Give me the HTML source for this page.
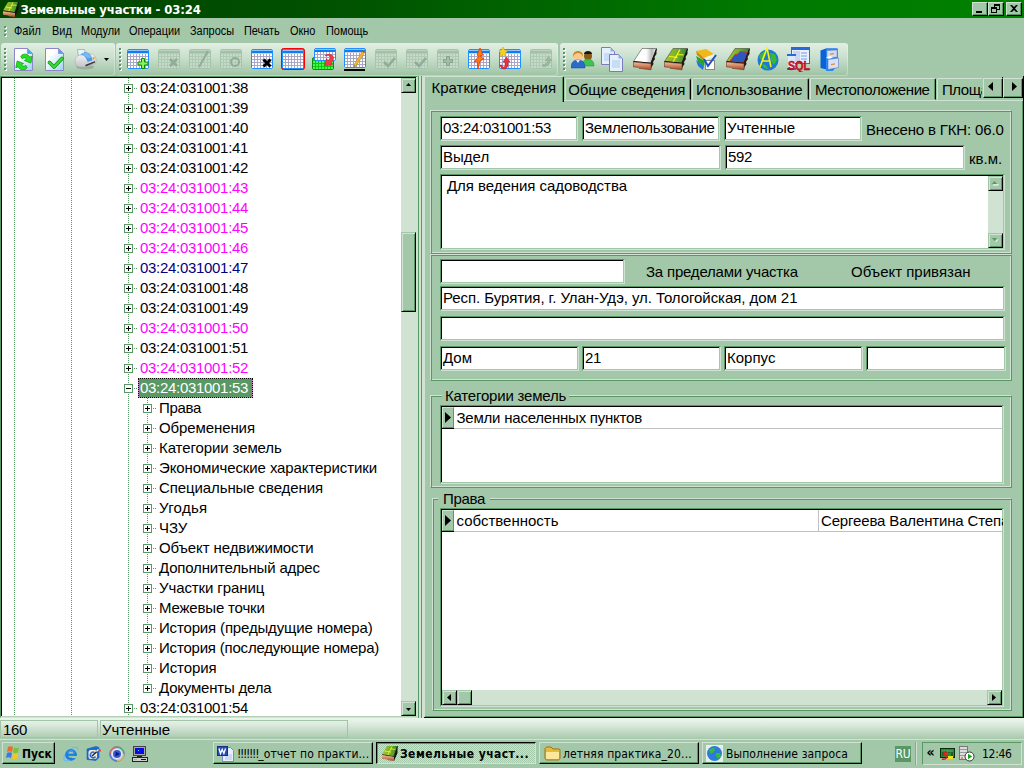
<!DOCTYPE html><html lang="ru"><head><meta charset="utf-8"><title>Земельные участки - 03:24</title><style>
*{margin:0;padding:0;box-sizing:border-box}
html,body{width:1024px;height:768px;overflow:hidden;background:#a2c8a9;}
body{position:relative;font-family:"Liberation Sans","DejaVu Sans",sans-serif;font-size:15px;color:#000;-webkit-font-smoothing:none}
.a{position:absolute}
.t{position:absolute;white-space:nowrap;line-height:20px;height:20px}
#title{left:0;top:0;width:1024px;height:18px;background:linear-gradient(90deg,#004400 0%,#005000 30%,#007a00 75%,#008000 100%)}
#title .cap{left:20.500px;top:1px;height:18px;line-height:18px;color:#fff;font-weight:bold;font-size:13px;font-family:"DejaVu Sans Condensed","Liberation Sans",sans-serif;letter-spacing:-0.15px}
.wb{position:absolute;top:2px;width:16px;height:14px;background:#a2c8a9;border:1px solid;border-color:#d0e3d3 #000 #000 #d0e3d3;box-shadow:inset -1px -1px 0 #599764}
.menu{font-family:"Liberation Sans",sans-serif;font-size:12px;top:21px;transform:scaleX(.91);transform-origin:0 0}
.tb{position:absolute;top:43px;height:33px;border-radius:3px;box-shadow:inset -1px -1px 0 rgba(255,255,255,.3);background:linear-gradient(180deg,#e2efe3 0%,#c9dfcc 45%,#a9cbae 85%,#9cc1a2 100%);}
.grip{position:absolute;top:5px;left:3px;width:3px;height:24px}
.grip:before,.grip:after{content:"";position:absolute;width:2px;height:22px}
.grip:before{left:1px;top:1px;background:repeating-linear-gradient(180deg,#fff 0 2px,transparent 2px 4px)}
.grip:after{left:0;top:0;background:repeating-linear-gradient(180deg,#599764 0 2px,transparent 2px 4px)}
.inp{position:absolute;background:#fff;border:1px solid;border-color:#599764 #d0e3d3 #d0e3d3 #599764;box-shadow:inset -1px -1px 0 #a2c8a9, inset 1px 1px 0 #000}
.inp span{position:absolute;left:2px;top:2px;line-height:18px;white-space:nowrap}
.bevel{position:absolute;border:1px solid;border-color:#d0e3d3 #599764 #599764 #d0e3d3;box-shadow:inset 1px 1px 0 #599764, inset -1px -1px 0 #d0e3d3}
.grp{position:absolute;border:1px solid;border-color:#599764 #d0e3d3 #d0e3d3 #599764;box-shadow:inset 1px 1px 0 #d0e3d3, inset -1px -1px 0 #599764}
.lbl{position:absolute;white-space:nowrap;line-height:18px;background:#a2c8a9}
.sbtn{position:absolute;background:#a2c8a9;border:1px solid;border-color:#a2c8a9 #000 #000 #a2c8a9;box-shadow:inset 1px 1px 0 #d0e3d3, inset -1px -1px 0 #599764}
.tree{position:absolute;left:0;top:76px;width:418px;height:642px;background:#fff;border:1px solid;border-color:#599764 #d0e3d3 #d0e3d3 #599764;box-shadow:inset -1px -1px 0 #d0e3d3, inset 1px 1px 0 #000;overflow:hidden}
.node{position:absolute;white-space:nowrap;line-height:20px;height:20px;letter-spacing:-0.3px}
.node.c{letter-spacing:-0.1px}
.pm{position:absolute;width:9px;height:9px;border:1px solid #599764;background:#fff}
.pm i{position:absolute;left:1px;top:3px;width:5px;height:1px;background:#000}
.pm b{position:absolute;left:3px;top:1px;width:1px;height:5px;background:#000}
.vd{position:absolute;width:1px;background:repeating-linear-gradient(180deg,#599764 0 1px,#fff 1px 2px)}
.hd{position:absolute;height:1px;background:repeating-linear-gradient(90deg,#599764 0 1px,#fff 1px 2px)}
.task{position:absolute;top:742px;height:22px;background:#a2c8a9;border:1px solid;border-color:#d0e3d3 #000 #000 #d0e3d3;box-shadow:inset -1px -1px 0 #599764;font-family:"DejaVu Sans Condensed","Liberation Sans",sans-serif;font-size:12px;letter-spacing:.12px;line-height:20px;white-space:nowrap;overflow:hidden}
.task span{position:absolute;left:23px;top:1px}
.tab{position:absolute;top:78px;height:22px;border:1px solid;border-color:#d0e3d3 #000 transparent #d0e3d3;border-radius:2px 2px 0 0;box-shadow:inset -1px 0 0 #599764}
.tab span{position:absolute;top:1px;line-height:20px;white-space:nowrap}
</style></head><body>
<div id="title" class="a">
<svg class="a" style="left:2px;top:1px" width="17" height="17" viewBox="0 0 17 17"><polygon points="16.500,1 16.500,8 13,16 13,11.500" fill="#1a120c"/><polygon points="6,1 16.500,1 13,11.500 1,9.500" fill="url(#gg)"/><path d="M3.500 6l6.500 1M11 1.500l-4.500 9M9.500 4l5 .3" stroke="#f0f01a" stroke-width=".9" fill="none"/><path d="M1 9.700l12 1.900 3.500-10.500" stroke="#0a0a0a" stroke-width=".8" fill="none"/><polygon points="1,10.200 13,12 13,16 7,15.200 6,14.500 1,13.800" fill="url(#gb)"/></svg>
<div class="t cap">Земельные участки - 03:24</div>
<div class="wb" style="left:972px"><i class="a" style="left:3px;top:8px;width:6px;height:2px;background:#000"></i></div>
<div class="wb" style="left:988px"><i class="a" style="left:5px;top:1px;width:6px;height:6px;border:1px solid #000;border-top-width:2px"></i><i class="a" style="left:2px;top:4px;width:6px;height:6px;border:1px solid #000;border-top-width:2px;background:#a2c8a9"></i></div>
<div class="wb" style="left:1006px"><svg class="a" style="left:3px;top:2px" width="8" height="7" viewBox="0 0 8 7"><path d="M0 0h2l2 2 2-2h2L5 3.5 8 7H6L4 5 2 7H0L3 3.5z" fill="#000"/></svg></div>
</div>
<div class="grip" style="left:4px;top:26px;height:11px;overflow:hidden"></div>
<div class="t menu" style="left:14px">Файл</div>
<div class="t menu" style="left:52px">Вид</div>
<div class="t menu" style="left:81px">Модули</div>
<div class="t menu" style="left:129px">Операции</div>
<div class="t menu" style="left:190px">Запросы</div>
<div class="t menu" style="left:244px">Печать</div>
<div class="t menu" style="left:290px">Окно</div>
<div class="t menu" style="left:326px">Помощь</div>
<div class="tb" style="left:1px;width:114px"><div class="grip"></div>
<svg class="a" style="left:0;top:0" width="0" height="0"><defs><linearGradient id="gd" x1="0" y1="0" x2="1" y2="1"><stop offset=".3" stop-color="#fff"/><stop offset="1" stop-color="#9fd0f5"/></linearGradient><linearGradient id="gp" x1="0" y1="0" x2="0" y2="1"><stop offset="0" stop-color="#f4f4f4"/><stop offset="1" stop-color="#c4c4c8"/></linearGradient></defs></svg>
<svg class="a" style="left:13px;top:5px" width="19" height="23" viewBox="0 0 19 23"><path d="M.5.5H13.500L18.500 5.500V22.500H.5z" fill="url(#gd)" stroke="#8f86c8"/><path d="M13.500.5V5.500H18.500z" fill="#4aa8f0" stroke="#8f86c8" stroke-width=".8"/><g transform="translate(10 14) scale(1.300) translate(-10 -14)"><path d="M7.500 9.500a4.200 4.200 0 0 1 7 .8l1.800-.8-1 5.300-5-2 1.800-1a2.300 2.300 0 0 0-3.500-.3z" fill="#22e022" stroke="#14a014" stroke-width=".6"/><path d="M12.500 18.500a4.200 4.200 0 0 1-7-.8l-1.800.8 1-5.300 5 2-1.800 1a2.300 2.300 0 0 0 3.500.3z" fill="#22e022" stroke="#14a014" stroke-width=".6"/></g></svg>
<svg class="a" style="left:44px;top:5px" width="19" height="23" viewBox="0 0 19 23"><path d="M.5.5H13.500L18.500 5.500V22.500H.5z" fill="url(#gd)" stroke="#8f86c8"/><path d="M13.500.5V5.500H18.500z" fill="#4aa8f0" stroke="#8f86c8" stroke-width=".8"/><path d="M4.500 14.500l4.500 4.500 8-8.500" stroke="#129012" stroke-width="3.600" stroke-linecap="round" stroke-linejoin="round" fill="none"/><path d="M4.500 14.500l4.500 4.500 8-8.500" stroke="#34dc34" stroke-width="2.200" stroke-linecap="round" stroke-linejoin="round" fill="none"/></svg>
<svg class="a" style="left:73px;top:5px" width="24" height="23" viewBox="0 0 24 23"><ellipse cx="11" cy="19" rx="9" ry="2.500" fill="#7f9a84" opacity=".55"/><path d="M3.500 1.500h7l1 5-7 2z" fill="#e6f4fc" stroke="#9aa0a8" stroke-width=".7"/><path d="M1 13c0-4 3-6 6-6l9-1c4 0 6 3 6 6v3l-9 4H6c-3 0-5-3-5-6z" fill="url(#gp)" stroke="#a8a8ae" stroke-width=".6"/><path d="M6 6.500l5-2.500c4 0 7 4 7.500 8.500l-5 1.500c-1-4-3-7-7.500-7.500z" fill="#4a9ae8"/><path d="M8 6l3-1.500c3 0 5 2 6 5l-3 1z" fill="#78b8f4"/><path d="M11 17l10-4v1.500l-9 4z" fill="#3a3a40"/><rect x="18.500" y="9" width="2" height="2.500" fill="#f5a030"/></svg>
<svg class="a" style="left:103px;top:15px" width="5" height="3"><path d="M0 0h5L2.500 3z" fill="#000"/></svg>
</div>
<div class="tb" style="left:116px;width:442px"><div class="grip"></div>
<svg class="a" style="left:11px;top:6px" width="22" height="20" viewBox="0 0 22 20"><rect x="0.5" y="0.5" width="21" height="19" rx="1.500" fill="#aaa6c8" stroke="#1e90ff"/><rect x="1" y="1" width="20" height="1" fill="#8cc6ff"/><rect x="1" y="2" width="20" height="2" fill="#0f7cf0"/><rect x="1" y="4" width="20" height="1" fill="#d8c8d8"/><rect x="1" y="5" width="2" height="2" fill="#fff"/><rect x="4" y="5" width="2" height="2" fill="#fff"/><rect x="7" y="5" width="2" height="2" fill="#fff"/><rect x="10" y="5" width="2" height="2" fill="#fff"/><rect x="13" y="5" width="2" height="2" fill="#fff"/><rect x="16" y="5" width="2" height="2" fill="#fff"/><rect x="19" y="5" width="2" height="2" fill="#fff"/><rect x="1" y="8" width="2" height="2" fill="#fff"/><rect x="4" y="8" width="2" height="2" fill="#fff"/><rect x="7" y="8" width="2" height="2" fill="#fff"/><rect x="10" y="8" width="2" height="2" fill="#fff"/><rect x="13" y="8" width="2" height="2" fill="#fff"/><rect x="16" y="8" width="2" height="2" fill="#fff"/><rect x="19" y="8" width="2" height="2" fill="#fff"/><rect x="1" y="11" width="2" height="2" fill="#fff"/><rect x="4" y="11" width="2" height="2" fill="#fff"/><rect x="7" y="11" width="2" height="2" fill="#fff"/><rect x="10" y="11" width="2" height="2" fill="#fff"/><rect x="13" y="11" width="2" height="2" fill="#fff"/><rect x="16" y="11" width="2" height="2" fill="#fff"/><rect x="19" y="11" width="2" height="2" fill="#fff"/><rect x="1" y="14" width="2" height="2" fill="#fff"/><rect x="4" y="14" width="2" height="2" fill="#fff"/><rect x="7" y="14" width="2" height="2" fill="#fff"/><rect x="10" y="14" width="2" height="2" fill="#fff"/><rect x="13" y="14" width="2" height="2" fill="#fff"/><rect x="16" y="14" width="2" height="2" fill="#fff"/><rect x="19" y="14" width="2" height="2" fill="#fff"/><rect x="1" y="17" width="2" height="2" fill="#fff"/><rect x="4" y="17" width="2" height="2" fill="#fff"/><rect x="7" y="17" width="2" height="2" fill="#fff"/><rect x="10" y="17" width="2" height="2" fill="#fff"/><rect x="13" y="17" width="2" height="2" fill="#fff"/><rect x="16" y="17" width="2" height="2" fill="#fff"/><rect x="19" y="17" width="2" height="2" fill="#fff"/><path d="M14.500 9.500h3v3.500h3.500v3h-3.500v3.500h-3v-3.500h-3.500v-3h3.500z" fill="#8cf05a" stroke="#0f8a0f" stroke-width="1"/></svg>
<svg class="a" style="left:42px;top:6px" width="22" height="20" viewBox="0 0 22 20"><rect x="0.5" y="0.5" width="21" height="19" rx="1.500" fill="#b0cab4" stroke="#a6c4aa"/><rect x="1" y="1" width="20" height="1" fill="#bcd3bf"/><rect x="1" y="2" width="20" height="2" fill="#a3c1a7"/><rect x="1" y="5" width="2" height="2" fill="#c6dac9"/><rect x="4" y="5" width="2" height="2" fill="#c6dac9"/><rect x="7" y="5" width="2" height="2" fill="#c6dac9"/><rect x="10" y="5" width="2" height="2" fill="#c6dac9"/><rect x="13" y="5" width="2" height="2" fill="#c6dac9"/><rect x="16" y="5" width="2" height="2" fill="#c6dac9"/><rect x="19" y="5" width="2" height="2" fill="#c6dac9"/><rect x="1" y="8" width="2" height="2" fill="#c6dac9"/><rect x="4" y="8" width="2" height="2" fill="#c6dac9"/><rect x="7" y="8" width="2" height="2" fill="#c6dac9"/><rect x="10" y="8" width="2" height="2" fill="#c6dac9"/><rect x="13" y="8" width="2" height="2" fill="#c6dac9"/><rect x="16" y="8" width="2" height="2" fill="#c6dac9"/><rect x="19" y="8" width="2" height="2" fill="#c6dac9"/><rect x="1" y="11" width="2" height="2" fill="#c6dac9"/><rect x="4" y="11" width="2" height="2" fill="#c6dac9"/><rect x="7" y="11" width="2" height="2" fill="#c6dac9"/><rect x="10" y="11" width="2" height="2" fill="#c6dac9"/><rect x="13" y="11" width="2" height="2" fill="#c6dac9"/><rect x="16" y="11" width="2" height="2" fill="#c6dac9"/><rect x="19" y="11" width="2" height="2" fill="#c6dac9"/><rect x="1" y="14" width="2" height="2" fill="#c6dac9"/><rect x="4" y="14" width="2" height="2" fill="#c6dac9"/><rect x="7" y="14" width="2" height="2" fill="#c6dac9"/><rect x="10" y="14" width="2" height="2" fill="#c6dac9"/><rect x="13" y="14" width="2" height="2" fill="#c6dac9"/><rect x="16" y="14" width="2" height="2" fill="#c6dac9"/><rect x="19" y="14" width="2" height="2" fill="#c6dac9"/><rect x="1" y="17" width="2" height="2" fill="#c6dac9"/><rect x="4" y="17" width="2" height="2" fill="#c6dac9"/><rect x="7" y="17" width="2" height="2" fill="#c6dac9"/><rect x="10" y="17" width="2" height="2" fill="#c6dac9"/><rect x="13" y="17" width="2" height="2" fill="#c6dac9"/><rect x="16" y="17" width="2" height="2" fill="#c6dac9"/><rect x="19" y="17" width="2" height="2" fill="#c6dac9"/><path d="M12 10l7 7m0-7l-7 7" stroke="#8fae95" stroke-width="2.600"/></svg>
<svg class="a" style="left:73px;top:6px" width="22" height="20" viewBox="0 0 22 20"><rect x="0.5" y="0.5" width="21" height="19" rx="1.500" fill="#b0cab4" stroke="#a6c4aa"/><rect x="1" y="1" width="20" height="1" fill="#bcd3bf"/><rect x="1" y="2" width="20" height="2" fill="#a3c1a7"/><rect x="1" y="5" width="2" height="2" fill="#c6dac9"/><rect x="4" y="5" width="2" height="2" fill="#c6dac9"/><rect x="7" y="5" width="2" height="2" fill="#c6dac9"/><rect x="10" y="5" width="2" height="2" fill="#c6dac9"/><rect x="13" y="5" width="2" height="2" fill="#c6dac9"/><rect x="16" y="5" width="2" height="2" fill="#c6dac9"/><rect x="19" y="5" width="2" height="2" fill="#c6dac9"/><rect x="1" y="8" width="2" height="2" fill="#c6dac9"/><rect x="4" y="8" width="2" height="2" fill="#c6dac9"/><rect x="7" y="8" width="2" height="2" fill="#c6dac9"/><rect x="10" y="8" width="2" height="2" fill="#c6dac9"/><rect x="13" y="8" width="2" height="2" fill="#c6dac9"/><rect x="16" y="8" width="2" height="2" fill="#c6dac9"/><rect x="19" y="8" width="2" height="2" fill="#c6dac9"/><rect x="1" y="11" width="2" height="2" fill="#c6dac9"/><rect x="4" y="11" width="2" height="2" fill="#c6dac9"/><rect x="7" y="11" width="2" height="2" fill="#c6dac9"/><rect x="10" y="11" width="2" height="2" fill="#c6dac9"/><rect x="13" y="11" width="2" height="2" fill="#c6dac9"/><rect x="16" y="11" width="2" height="2" fill="#c6dac9"/><rect x="19" y="11" width="2" height="2" fill="#c6dac9"/><rect x="1" y="14" width="2" height="2" fill="#c6dac9"/><rect x="4" y="14" width="2" height="2" fill="#c6dac9"/><rect x="7" y="14" width="2" height="2" fill="#c6dac9"/><rect x="10" y="14" width="2" height="2" fill="#c6dac9"/><rect x="13" y="14" width="2" height="2" fill="#c6dac9"/><rect x="16" y="14" width="2" height="2" fill="#c6dac9"/><rect x="19" y="14" width="2" height="2" fill="#c6dac9"/><rect x="1" y="17" width="2" height="2" fill="#c6dac9"/><rect x="4" y="17" width="2" height="2" fill="#c6dac9"/><rect x="7" y="17" width="2" height="2" fill="#c6dac9"/><rect x="10" y="17" width="2" height="2" fill="#c6dac9"/><rect x="13" y="17" width="2" height="2" fill="#c6dac9"/><rect x="16" y="17" width="2" height="2" fill="#c6dac9"/><rect x="19" y="17" width="2" height="2" fill="#c6dac9"/><path d="M19 2L10 18" stroke="#8fae95" stroke-width="2"/></svg>
<svg class="a" style="left:104px;top:6px" width="22" height="20" viewBox="0 0 22 20"><rect x="0.5" y="0.5" width="21" height="19" rx="1.500" fill="#b0cab4" stroke="#a6c4aa"/><rect x="1" y="1" width="20" height="1" fill="#bcd3bf"/><rect x="1" y="2" width="20" height="2" fill="#a3c1a7"/><rect x="1" y="5" width="2" height="2" fill="#c6dac9"/><rect x="4" y="5" width="2" height="2" fill="#c6dac9"/><rect x="7" y="5" width="2" height="2" fill="#c6dac9"/><rect x="10" y="5" width="2" height="2" fill="#c6dac9"/><rect x="13" y="5" width="2" height="2" fill="#c6dac9"/><rect x="16" y="5" width="2" height="2" fill="#c6dac9"/><rect x="19" y="5" width="2" height="2" fill="#c6dac9"/><rect x="1" y="8" width="2" height="2" fill="#c6dac9"/><rect x="4" y="8" width="2" height="2" fill="#c6dac9"/><rect x="7" y="8" width="2" height="2" fill="#c6dac9"/><rect x="10" y="8" width="2" height="2" fill="#c6dac9"/><rect x="13" y="8" width="2" height="2" fill="#c6dac9"/><rect x="16" y="8" width="2" height="2" fill="#c6dac9"/><rect x="19" y="8" width="2" height="2" fill="#c6dac9"/><rect x="1" y="11" width="2" height="2" fill="#c6dac9"/><rect x="4" y="11" width="2" height="2" fill="#c6dac9"/><rect x="7" y="11" width="2" height="2" fill="#c6dac9"/><rect x="10" y="11" width="2" height="2" fill="#c6dac9"/><rect x="13" y="11" width="2" height="2" fill="#c6dac9"/><rect x="16" y="11" width="2" height="2" fill="#c6dac9"/><rect x="19" y="11" width="2" height="2" fill="#c6dac9"/><rect x="1" y="14" width="2" height="2" fill="#c6dac9"/><rect x="4" y="14" width="2" height="2" fill="#c6dac9"/><rect x="7" y="14" width="2" height="2" fill="#c6dac9"/><rect x="10" y="14" width="2" height="2" fill="#c6dac9"/><rect x="13" y="14" width="2" height="2" fill="#c6dac9"/><rect x="16" y="14" width="2" height="2" fill="#c6dac9"/><rect x="19" y="14" width="2" height="2" fill="#c6dac9"/><rect x="1" y="17" width="2" height="2" fill="#c6dac9"/><rect x="4" y="17" width="2" height="2" fill="#c6dac9"/><rect x="7" y="17" width="2" height="2" fill="#c6dac9"/><rect x="10" y="17" width="2" height="2" fill="#c6dac9"/><rect x="13" y="17" width="2" height="2" fill="#c6dac9"/><rect x="16" y="17" width="2" height="2" fill="#c6dac9"/><rect x="19" y="17" width="2" height="2" fill="#c6dac9"/><circle cx="15" cy="13" r="4" fill="none" stroke="#8fae95" stroke-width="2"/></svg>
<svg class="a" style="left:135px;top:6px" width="22" height="20" viewBox="0 0 22 20"><rect x="0.5" y="0.5" width="21" height="19" rx="1.500" fill="#aaa6c8" stroke="#1e90ff"/><rect x="1" y="1" width="20" height="1" fill="#8cc6ff"/><rect x="1" y="2" width="20" height="2" fill="#0f7cf0"/><rect x="1" y="4" width="20" height="1" fill="#d8c8d8"/><rect x="1" y="5" width="2" height="2" fill="#fff"/><rect x="4" y="5" width="2" height="2" fill="#fff"/><rect x="7" y="5" width="2" height="2" fill="#fff"/><rect x="10" y="5" width="2" height="2" fill="#fff"/><rect x="13" y="5" width="2" height="2" fill="#fff"/><rect x="16" y="5" width="2" height="2" fill="#fff"/><rect x="19" y="5" width="2" height="2" fill="#fff"/><rect x="1" y="8" width="2" height="2" fill="#fff"/><rect x="4" y="8" width="2" height="2" fill="#fff"/><rect x="7" y="8" width="2" height="2" fill="#fff"/><rect x="10" y="8" width="2" height="2" fill="#fff"/><rect x="13" y="8" width="2" height="2" fill="#fff"/><rect x="16" y="8" width="2" height="2" fill="#fff"/><rect x="19" y="8" width="2" height="2" fill="#fff"/><rect x="1" y="11" width="2" height="2" fill="#fff"/><rect x="4" y="11" width="2" height="2" fill="#fff"/><rect x="7" y="11" width="2" height="2" fill="#fff"/><rect x="10" y="11" width="2" height="2" fill="#fff"/><rect x="13" y="11" width="2" height="2" fill="#fff"/><rect x="16" y="11" width="2" height="2" fill="#fff"/><rect x="19" y="11" width="2" height="2" fill="#fff"/><rect x="1" y="14" width="2" height="2" fill="#fff"/><rect x="4" y="14" width="2" height="2" fill="#fff"/><rect x="7" y="14" width="2" height="2" fill="#fff"/><rect x="10" y="14" width="2" height="2" fill="#fff"/><rect x="13" y="14" width="2" height="2" fill="#fff"/><rect x="16" y="14" width="2" height="2" fill="#fff"/><rect x="19" y="14" width="2" height="2" fill="#fff"/><rect x="1" y="17" width="2" height="2" fill="#fff"/><rect x="4" y="17" width="2" height="2" fill="#fff"/><rect x="7" y="17" width="2" height="2" fill="#fff"/><rect x="10" y="17" width="2" height="2" fill="#fff"/><rect x="13" y="17" width="2" height="2" fill="#fff"/><rect x="16" y="17" width="2" height="2" fill="#fff"/><rect x="19" y="17" width="2" height="2" fill="#fff"/><path d="M12.500 10.500l7 7m0-7l-7 7" stroke="#000" stroke-width="3"/></svg>
<svg class="a" style="left:165px;top:5px" width="24" height="22" viewBox="-1 -1 24 22"><rect x="-.5" y="-.5" width="23" height="21" rx="2" fill="#f01010" stroke="#ff0000"/><rect x="0.5" y="0.5" width="21" height="19" rx="1.500" fill="#aaa6c8" stroke="#1e90ff"/><rect x="1" y="1" width="20" height="1" fill="#8cc6ff"/><rect x="1" y="2" width="20" height="2" fill="#0f7cf0"/><rect x="1" y="4" width="20" height="1" fill="#d8c8d8"/><rect x="1" y="5" width="2" height="2" fill="#fff"/><rect x="4" y="5" width="2" height="2" fill="#fff"/><rect x="7" y="5" width="2" height="2" fill="#fff"/><rect x="10" y="5" width="2" height="2" fill="#fff"/><rect x="13" y="5" width="2" height="2" fill="#fff"/><rect x="16" y="5" width="2" height="2" fill="#fff"/><rect x="19" y="5" width="2" height="2" fill="#fff"/><rect x="1" y="8" width="2" height="2" fill="#fff"/><rect x="4" y="8" width="2" height="2" fill="#fff"/><rect x="7" y="8" width="2" height="2" fill="#fff"/><rect x="10" y="8" width="2" height="2" fill="#fff"/><rect x="13" y="8" width="2" height="2" fill="#fff"/><rect x="16" y="8" width="2" height="2" fill="#fff"/><rect x="19" y="8" width="2" height="2" fill="#fff"/><rect x="1" y="11" width="2" height="2" fill="#fff"/><rect x="4" y="11" width="2" height="2" fill="#fff"/><rect x="7" y="11" width="2" height="2" fill="#fff"/><rect x="10" y="11" width="2" height="2" fill="#fff"/><rect x="13" y="11" width="2" height="2" fill="#fff"/><rect x="16" y="11" width="2" height="2" fill="#fff"/><rect x="19" y="11" width="2" height="2" fill="#fff"/><rect x="1" y="14" width="2" height="2" fill="#fff"/><rect x="4" y="14" width="2" height="2" fill="#fff"/><rect x="7" y="14" width="2" height="2" fill="#fff"/><rect x="10" y="14" width="2" height="2" fill="#fff"/><rect x="13" y="14" width="2" height="2" fill="#fff"/><rect x="16" y="14" width="2" height="2" fill="#fff"/><rect x="19" y="14" width="2" height="2" fill="#fff"/><rect x="1" y="17" width="2" height="2" fill="#fff"/><rect x="4" y="17" width="2" height="2" fill="#fff"/><rect x="7" y="17" width="2" height="2" fill="#fff"/><rect x="10" y="17" width="2" height="2" fill="#fff"/><rect x="13" y="17" width="2" height="2" fill="#fff"/><rect x="16" y="17" width="2" height="2" fill="#fff"/><rect x="19" y="17" width="2" height="2" fill="#fff"/></svg>
<svg class="a" style="left:196px;top:5px" width="25" height="22" viewBox="0 0 25 22"><rect x=".5" y="9.500" width="21" height="12" rx="1.500" fill="#10c810" stroke="#0a900a"/><rect x="1" y="13" width="2" height="2" fill="#48f458"/><rect x="4" y="13" width="2" height="2" fill="#48f458"/><rect x="7" y="13" width="2" height="2" fill="#48f458"/><rect x="10" y="13" width="2" height="2" fill="#48f458"/><rect x="13" y="13" width="2" height="2" fill="#48f458"/><rect x="16" y="13" width="2" height="2" fill="#48f458"/><rect x="19" y="13" width="2" height="2" fill="#48f458"/><rect x="1" y="16" width="2" height="2" fill="#48f458"/><rect x="4" y="16" width="2" height="2" fill="#48f458"/><rect x="7" y="16" width="2" height="2" fill="#48f458"/><rect x="10" y="16" width="2" height="2" fill="#48f458"/><rect x="13" y="16" width="2" height="2" fill="#48f458"/><rect x="16" y="16" width="2" height="2" fill="#48f458"/><rect x="19" y="16" width="2" height="2" fill="#48f458"/><rect x="1" y="19" width="2" height="2" fill="#48f458"/><rect x="4" y="19" width="2" height="2" fill="#48f458"/><rect x="7" y="19" width="2" height="2" fill="#48f458"/><rect x="10" y="19" width="2" height="2" fill="#48f458"/><rect x="13" y="19" width="2" height="2" fill="#48f458"/><rect x="16" y="19" width="2" height="2" fill="#48f458"/><rect x="19" y="19" width="2" height="2" fill="#48f458"/><rect x="2.500" y=".5" width="21" height="12" rx="1.500" fill="#aaa6c8" stroke="#1e90ff"/><rect x="3" y="1" width="20" height="1" fill="#8cc6ff"/><rect x="3" y="2" width="20" height="2" fill="#0f7cf0"/><rect x="3" y="4" width="2" height="2" fill="#fff"/><rect x="6" y="4" width="2" height="2" fill="#fff"/><rect x="9" y="4" width="2" height="2" fill="#fff"/><rect x="12" y="4" width="2" height="2" fill="#fff"/><rect x="15" y="4" width="2" height="2" fill="#fff"/><rect x="18" y="4" width="2" height="2" fill="#fff"/><rect x="21" y="4" width="2" height="2" fill="#fff"/><rect x="3" y="7" width="2" height="2" fill="#fff"/><rect x="6" y="7" width="2" height="2" fill="#fff"/><rect x="9" y="7" width="2" height="2" fill="#fff"/><rect x="12" y="7" width="2" height="2" fill="#fff"/><rect x="15" y="7" width="2" height="2" fill="#fff"/><rect x="18" y="7" width="2" height="2" fill="#fff"/><rect x="21" y="7" width="2" height="2" fill="#fff"/><rect x="3" y="10" width="2" height="2" fill="#fff"/><rect x="6" y="10" width="2" height="2" fill="#fff"/><rect x="9" y="10" width="2" height="2" fill="#fff"/><rect x="12" y="10" width="2" height="2" fill="#fff"/><rect x="15" y="10" width="2" height="2" fill="#fff"/><rect x="18" y="10" width="2" height="2" fill="#fff"/><rect x="21" y="10" width="2" height="2" fill="#fff"/><path d="M13 7.500c3-2 8-1.500 8.500 2 .3 2.500-1 4-2.500 5.500l1.500 2-8 .5 2-7 1.500 2c1.500-1 2.500-2 2.300-3.500-.3-1.800-3-2-4.800-1z" fill="#f03a48" stroke="#c01826" stroke-width=".5"/></svg>
<svg class="a" style="left:228px;top:5px" width="22" height="24" viewBox="0 0 22 24"><rect x="0.5" y="0.5" width="21" height="19" rx="1.500" fill="#aaa6c8" stroke="#1e90ff"/><rect x="1" y="1" width="20" height="1" fill="#8cc6ff"/><rect x="1" y="2" width="20" height="2" fill="#0f7cf0"/><rect x="1" y="4" width="20" height="1" fill="#d8c8d8"/><rect x="1" y="5" width="2" height="2" fill="#fff"/><rect x="4" y="5" width="2" height="2" fill="#fff"/><rect x="7" y="5" width="2" height="2" fill="#fff"/><rect x="10" y="5" width="2" height="2" fill="#fff"/><rect x="13" y="5" width="2" height="2" fill="#fff"/><rect x="16" y="5" width="2" height="2" fill="#fff"/><rect x="19" y="5" width="2" height="2" fill="#fff"/><rect x="1" y="8" width="2" height="2" fill="#fff"/><rect x="4" y="8" width="2" height="2" fill="#fff"/><rect x="7" y="8" width="2" height="2" fill="#fff"/><rect x="10" y="8" width="2" height="2" fill="#fff"/><rect x="13" y="8" width="2" height="2" fill="#fff"/><rect x="16" y="8" width="2" height="2" fill="#fff"/><rect x="19" y="8" width="2" height="2" fill="#fff"/><rect x="1" y="11" width="2" height="2" fill="#fff"/><rect x="4" y="11" width="2" height="2" fill="#fff"/><rect x="7" y="11" width="2" height="2" fill="#fff"/><rect x="10" y="11" width="2" height="2" fill="#fff"/><rect x="13" y="11" width="2" height="2" fill="#fff"/><rect x="16" y="11" width="2" height="2" fill="#fff"/><rect x="19" y="11" width="2" height="2" fill="#fff"/><rect x="1" y="14" width="2" height="2" fill="#fff"/><rect x="4" y="14" width="2" height="2" fill="#fff"/><rect x="7" y="14" width="2" height="2" fill="#fff"/><rect x="10" y="14" width="2" height="2" fill="#fff"/><rect x="13" y="14" width="2" height="2" fill="#fff"/><rect x="16" y="14" width="2" height="2" fill="#fff"/><rect x="19" y="14" width="2" height="2" fill="#fff"/><rect x="1" y="17" width="2" height="2" fill="#fff"/><rect x="4" y="17" width="2" height="2" fill="#fff"/><rect x="7" y="17" width="2" height="2" fill="#fff"/><rect x="10" y="17" width="2" height="2" fill="#fff"/><rect x="13" y="17" width="2" height="2" fill="#fff"/><rect x="16" y="17" width="2" height="2" fill="#fff"/><rect x="19" y="17" width="2" height="2" fill="#fff"/><path d="M18.300 3.500l2.200 1.300-8.500 13.500-2.200-1.300z" fill="#f2b82c" stroke="#b07a14" stroke-width=".5"/><path d="M19 2l2.400 1.500-1 1.500-2.300-1.400z" fill="#c84848"/><path d="M9.800 17l2.200 1.300-2.800 1.500z" fill="#8a8a8a"/><rect x="0" y="21" width="21" height="2" fill="#000"/></svg>
<svg class="a" style="left:259px;top:6px" width="22" height="20" viewBox="0 0 22 20"><rect x="0.5" y="0.5" width="21" height="19" rx="1.500" fill="#b0cab4" stroke="#a6c4aa"/><rect x="1" y="1" width="20" height="1" fill="#bcd3bf"/><rect x="1" y="2" width="20" height="2" fill="#a3c1a7"/><rect x="1" y="5" width="2" height="2" fill="#c6dac9"/><rect x="4" y="5" width="2" height="2" fill="#c6dac9"/><rect x="7" y="5" width="2" height="2" fill="#c6dac9"/><rect x="10" y="5" width="2" height="2" fill="#c6dac9"/><rect x="13" y="5" width="2" height="2" fill="#c6dac9"/><rect x="16" y="5" width="2" height="2" fill="#c6dac9"/><rect x="19" y="5" width="2" height="2" fill="#c6dac9"/><rect x="1" y="8" width="2" height="2" fill="#c6dac9"/><rect x="4" y="8" width="2" height="2" fill="#c6dac9"/><rect x="7" y="8" width="2" height="2" fill="#c6dac9"/><rect x="10" y="8" width="2" height="2" fill="#c6dac9"/><rect x="13" y="8" width="2" height="2" fill="#c6dac9"/><rect x="16" y="8" width="2" height="2" fill="#c6dac9"/><rect x="19" y="8" width="2" height="2" fill="#c6dac9"/><rect x="1" y="11" width="2" height="2" fill="#c6dac9"/><rect x="4" y="11" width="2" height="2" fill="#c6dac9"/><rect x="7" y="11" width="2" height="2" fill="#c6dac9"/><rect x="10" y="11" width="2" height="2" fill="#c6dac9"/><rect x="13" y="11" width="2" height="2" fill="#c6dac9"/><rect x="16" y="11" width="2" height="2" fill="#c6dac9"/><rect x="19" y="11" width="2" height="2" fill="#c6dac9"/><rect x="1" y="14" width="2" height="2" fill="#c6dac9"/><rect x="4" y="14" width="2" height="2" fill="#c6dac9"/><rect x="7" y="14" width="2" height="2" fill="#c6dac9"/><rect x="10" y="14" width="2" height="2" fill="#c6dac9"/><rect x="13" y="14" width="2" height="2" fill="#c6dac9"/><rect x="16" y="14" width="2" height="2" fill="#c6dac9"/><rect x="19" y="14" width="2" height="2" fill="#c6dac9"/><rect x="1" y="17" width="2" height="2" fill="#c6dac9"/><rect x="4" y="17" width="2" height="2" fill="#c6dac9"/><rect x="7" y="17" width="2" height="2" fill="#c6dac9"/><rect x="10" y="17" width="2" height="2" fill="#c6dac9"/><rect x="13" y="17" width="2" height="2" fill="#c6dac9"/><rect x="16" y="17" width="2" height="2" fill="#c6dac9"/><rect x="19" y="17" width="2" height="2" fill="#c6dac9"/><path d="M9 13l4 4 7-8" stroke="#8fae95" stroke-width="2.600" fill="none"/></svg>
<svg class="a" style="left:290px;top:6px" width="22" height="20" viewBox="0 0 22 20"><rect x="0.5" y="0.5" width="21" height="19" rx="1.500" fill="#b0cab4" stroke="#a6c4aa"/><rect x="1" y="1" width="20" height="1" fill="#bcd3bf"/><rect x="1" y="2" width="20" height="2" fill="#a3c1a7"/><rect x="1" y="5" width="2" height="2" fill="#c6dac9"/><rect x="4" y="5" width="2" height="2" fill="#c6dac9"/><rect x="7" y="5" width="2" height="2" fill="#c6dac9"/><rect x="10" y="5" width="2" height="2" fill="#c6dac9"/><rect x="13" y="5" width="2" height="2" fill="#c6dac9"/><rect x="16" y="5" width="2" height="2" fill="#c6dac9"/><rect x="19" y="5" width="2" height="2" fill="#c6dac9"/><rect x="1" y="8" width="2" height="2" fill="#c6dac9"/><rect x="4" y="8" width="2" height="2" fill="#c6dac9"/><rect x="7" y="8" width="2" height="2" fill="#c6dac9"/><rect x="10" y="8" width="2" height="2" fill="#c6dac9"/><rect x="13" y="8" width="2" height="2" fill="#c6dac9"/><rect x="16" y="8" width="2" height="2" fill="#c6dac9"/><rect x="19" y="8" width="2" height="2" fill="#c6dac9"/><rect x="1" y="11" width="2" height="2" fill="#c6dac9"/><rect x="4" y="11" width="2" height="2" fill="#c6dac9"/><rect x="7" y="11" width="2" height="2" fill="#c6dac9"/><rect x="10" y="11" width="2" height="2" fill="#c6dac9"/><rect x="13" y="11" width="2" height="2" fill="#c6dac9"/><rect x="16" y="11" width="2" height="2" fill="#c6dac9"/><rect x="19" y="11" width="2" height="2" fill="#c6dac9"/><rect x="1" y="14" width="2" height="2" fill="#c6dac9"/><rect x="4" y="14" width="2" height="2" fill="#c6dac9"/><rect x="7" y="14" width="2" height="2" fill="#c6dac9"/><rect x="10" y="14" width="2" height="2" fill="#c6dac9"/><rect x="13" y="14" width="2" height="2" fill="#c6dac9"/><rect x="16" y="14" width="2" height="2" fill="#c6dac9"/><rect x="19" y="14" width="2" height="2" fill="#c6dac9"/><rect x="1" y="17" width="2" height="2" fill="#c6dac9"/><rect x="4" y="17" width="2" height="2" fill="#c6dac9"/><rect x="7" y="17" width="2" height="2" fill="#c6dac9"/><rect x="10" y="17" width="2" height="2" fill="#c6dac9"/><rect x="13" y="17" width="2" height="2" fill="#c6dac9"/><rect x="16" y="17" width="2" height="2" fill="#c6dac9"/><rect x="19" y="17" width="2" height="2" fill="#c6dac9"/><path d="M9 13l4 4 7-8" stroke="#8fae95" stroke-width="2.600" fill="none"/></svg>
<svg class="a" style="left:321px;top:6px" width="22" height="20" viewBox="0 0 22 20"><rect x="0.5" y="0.5" width="21" height="19" rx="1.500" fill="#b0cab4" stroke="#a6c4aa"/><rect x="1" y="1" width="20" height="1" fill="#bcd3bf"/><rect x="1" y="2" width="20" height="2" fill="#a3c1a7"/><rect x="1" y="5" width="2" height="2" fill="#c6dac9"/><rect x="4" y="5" width="2" height="2" fill="#c6dac9"/><rect x="7" y="5" width="2" height="2" fill="#c6dac9"/><rect x="10" y="5" width="2" height="2" fill="#c6dac9"/><rect x="13" y="5" width="2" height="2" fill="#c6dac9"/><rect x="16" y="5" width="2" height="2" fill="#c6dac9"/><rect x="19" y="5" width="2" height="2" fill="#c6dac9"/><rect x="1" y="8" width="2" height="2" fill="#c6dac9"/><rect x="4" y="8" width="2" height="2" fill="#c6dac9"/><rect x="7" y="8" width="2" height="2" fill="#c6dac9"/><rect x="10" y="8" width="2" height="2" fill="#c6dac9"/><rect x="13" y="8" width="2" height="2" fill="#c6dac9"/><rect x="16" y="8" width="2" height="2" fill="#c6dac9"/><rect x="19" y="8" width="2" height="2" fill="#c6dac9"/><rect x="1" y="11" width="2" height="2" fill="#c6dac9"/><rect x="4" y="11" width="2" height="2" fill="#c6dac9"/><rect x="7" y="11" width="2" height="2" fill="#c6dac9"/><rect x="10" y="11" width="2" height="2" fill="#c6dac9"/><rect x="13" y="11" width="2" height="2" fill="#c6dac9"/><rect x="16" y="11" width="2" height="2" fill="#c6dac9"/><rect x="19" y="11" width="2" height="2" fill="#c6dac9"/><rect x="1" y="14" width="2" height="2" fill="#c6dac9"/><rect x="4" y="14" width="2" height="2" fill="#c6dac9"/><rect x="7" y="14" width="2" height="2" fill="#c6dac9"/><rect x="10" y="14" width="2" height="2" fill="#c6dac9"/><rect x="13" y="14" width="2" height="2" fill="#c6dac9"/><rect x="16" y="14" width="2" height="2" fill="#c6dac9"/><rect x="19" y="14" width="2" height="2" fill="#c6dac9"/><rect x="1" y="17" width="2" height="2" fill="#c6dac9"/><rect x="4" y="17" width="2" height="2" fill="#c6dac9"/><rect x="7" y="17" width="2" height="2" fill="#c6dac9"/><rect x="10" y="17" width="2" height="2" fill="#c6dac9"/><rect x="13" y="17" width="2" height="2" fill="#c6dac9"/><rect x="16" y="17" width="2" height="2" fill="#c6dac9"/><rect x="19" y="17" width="2" height="2" fill="#c6dac9"/><path d="M9.500 7.500h3v3h3v3h-3v3h-3v-3h-3v-3h3z" fill="#a3bba7" stroke="#87a38c"/></svg>
<svg class="a" style="left:352px;top:4px" width="22" height="24" viewBox="0 -2 22 24"><rect x="0.5" y="0.5" width="21" height="19" rx="1.500" fill="#aaa6c8" stroke="#1e90ff"/><rect x="1" y="1" width="20" height="1" fill="#8cc6ff"/><rect x="1" y="2" width="20" height="2" fill="#0f7cf0"/><rect x="1" y="4" width="20" height="1" fill="#d8c8d8"/><rect x="1" y="5" width="2" height="2" fill="#fff"/><rect x="4" y="5" width="2" height="2" fill="#fff"/><rect x="7" y="5" width="2" height="2" fill="#fff"/><rect x="10" y="5" width="2" height="2" fill="#fff"/><rect x="13" y="5" width="2" height="2" fill="#fff"/><rect x="16" y="5" width="2" height="2" fill="#fff"/><rect x="19" y="5" width="2" height="2" fill="#fff"/><rect x="1" y="8" width="2" height="2" fill="#fff"/><rect x="4" y="8" width="2" height="2" fill="#fff"/><rect x="7" y="8" width="2" height="2" fill="#fff"/><rect x="10" y="8" width="2" height="2" fill="#fff"/><rect x="13" y="8" width="2" height="2" fill="#fff"/><rect x="16" y="8" width="2" height="2" fill="#fff"/><rect x="19" y="8" width="2" height="2" fill="#fff"/><rect x="1" y="11" width="2" height="2" fill="#fff"/><rect x="4" y="11" width="2" height="2" fill="#fff"/><rect x="7" y="11" width="2" height="2" fill="#fff"/><rect x="10" y="11" width="2" height="2" fill="#fff"/><rect x="13" y="11" width="2" height="2" fill="#fff"/><rect x="16" y="11" width="2" height="2" fill="#fff"/><rect x="19" y="11" width="2" height="2" fill="#fff"/><rect x="1" y="14" width="2" height="2" fill="#fff"/><rect x="4" y="14" width="2" height="2" fill="#fff"/><rect x="7" y="14" width="2" height="2" fill="#fff"/><rect x="10" y="14" width="2" height="2" fill="#fff"/><rect x="13" y="14" width="2" height="2" fill="#fff"/><rect x="16" y="14" width="2" height="2" fill="#fff"/><rect x="19" y="14" width="2" height="2" fill="#fff"/><rect x="1" y="17" width="2" height="2" fill="#fff"/><rect x="4" y="17" width="2" height="2" fill="#fff"/><rect x="7" y="17" width="2" height="2" fill="#fff"/><rect x="10" y="17" width="2" height="2" fill="#fff"/><rect x="13" y="17" width="2" height="2" fill="#fff"/><rect x="16" y="17" width="2" height="2" fill="#fff"/><rect x="19" y="17" width="2" height="2" fill="#fff"/><path d="M12-1l3 7-3 1 4 3-4 2-2 8-1-8-3 1 5-6-2-1z" fill="#ff7a10" stroke="#e03a08" stroke-width=".8"/></svg>
<svg class="a" style="left:383px;top:4px" width="22" height="24" viewBox="0 -2 22 24"><rect x="0.5" y="0.5" width="21" height="19" rx="1.500" fill="#aaa6c8" stroke="#1e90ff"/><rect x="1" y="1" width="20" height="1" fill="#8cc6ff"/><rect x="1" y="2" width="20" height="2" fill="#0f7cf0"/><rect x="1" y="4" width="20" height="1" fill="#d8c8d8"/><rect x="1" y="5" width="2" height="2" fill="#fff"/><rect x="4" y="5" width="2" height="2" fill="#fff"/><rect x="7" y="5" width="2" height="2" fill="#fff"/><rect x="10" y="5" width="2" height="2" fill="#fff"/><rect x="13" y="5" width="2" height="2" fill="#fff"/><rect x="16" y="5" width="2" height="2" fill="#fff"/><rect x="19" y="5" width="2" height="2" fill="#fff"/><rect x="1" y="8" width="2" height="2" fill="#fff"/><rect x="4" y="8" width="2" height="2" fill="#fff"/><rect x="7" y="8" width="2" height="2" fill="#fff"/><rect x="10" y="8" width="2" height="2" fill="#fff"/><rect x="13" y="8" width="2" height="2" fill="#fff"/><rect x="16" y="8" width="2" height="2" fill="#fff"/><rect x="19" y="8" width="2" height="2" fill="#fff"/><rect x="1" y="11" width="2" height="2" fill="#fff"/><rect x="4" y="11" width="2" height="2" fill="#fff"/><rect x="7" y="11" width="2" height="2" fill="#fff"/><rect x="10" y="11" width="2" height="2" fill="#fff"/><rect x="13" y="11" width="2" height="2" fill="#fff"/><rect x="16" y="11" width="2" height="2" fill="#fff"/><rect x="19" y="11" width="2" height="2" fill="#fff"/><rect x="1" y="14" width="2" height="2" fill="#fff"/><rect x="4" y="14" width="2" height="2" fill="#fff"/><rect x="7" y="14" width="2" height="2" fill="#fff"/><rect x="10" y="14" width="2" height="2" fill="#fff"/><rect x="13" y="14" width="2" height="2" fill="#fff"/><rect x="16" y="14" width="2" height="2" fill="#fff"/><rect x="19" y="14" width="2" height="2" fill="#fff"/><rect x="1" y="17" width="2" height="2" fill="#fff"/><rect x="4" y="17" width="2" height="2" fill="#fff"/><rect x="7" y="17" width="2" height="2" fill="#fff"/><rect x="10" y="17" width="2" height="2" fill="#fff"/><rect x="13" y="17" width="2" height="2" fill="#fff"/><rect x="16" y="17" width="2" height="2" fill="#fff"/><rect x="19" y="17" width="2" height="2" fill="#fff"/><path d="M4-2l1.500 3 3.500.5-2.500 2.500.5 3.500-3-1.700-3 1.700.5-3.500L-1 1.500l3.500-.5z" fill="#f5d020" stroke="#c9a010" stroke-width=".5"/><path d="M1 16c0 4 6 6 8 1v-4h2l-3.500-5-3.500 5h2v4c-1 2-3 1-3-1z" fill="#f03040" stroke="#b01020" stroke-width=".5"/></svg>
<svg class="a" style="left:414px;top:6px" width="22" height="20" viewBox="0 0 22 20"><rect x="0.5" y="0.5" width="21" height="19" rx="1.500" fill="#b0cab4" stroke="#a6c4aa"/><rect x="1" y="1" width="20" height="1" fill="#bcd3bf"/><rect x="1" y="2" width="20" height="2" fill="#a3c1a7"/><rect x="1" y="5" width="2" height="2" fill="#c6dac9"/><rect x="4" y="5" width="2" height="2" fill="#c6dac9"/><rect x="7" y="5" width="2" height="2" fill="#c6dac9"/><rect x="10" y="5" width="2" height="2" fill="#c6dac9"/><rect x="13" y="5" width="2" height="2" fill="#c6dac9"/><rect x="16" y="5" width="2" height="2" fill="#c6dac9"/><rect x="19" y="5" width="2" height="2" fill="#c6dac9"/><rect x="1" y="8" width="2" height="2" fill="#c6dac9"/><rect x="4" y="8" width="2" height="2" fill="#c6dac9"/><rect x="7" y="8" width="2" height="2" fill="#c6dac9"/><rect x="10" y="8" width="2" height="2" fill="#c6dac9"/><rect x="13" y="8" width="2" height="2" fill="#c6dac9"/><rect x="16" y="8" width="2" height="2" fill="#c6dac9"/><rect x="19" y="8" width="2" height="2" fill="#c6dac9"/><rect x="1" y="11" width="2" height="2" fill="#c6dac9"/><rect x="4" y="11" width="2" height="2" fill="#c6dac9"/><rect x="7" y="11" width="2" height="2" fill="#c6dac9"/><rect x="10" y="11" width="2" height="2" fill="#c6dac9"/><rect x="13" y="11" width="2" height="2" fill="#c6dac9"/><rect x="16" y="11" width="2" height="2" fill="#c6dac9"/><rect x="19" y="11" width="2" height="2" fill="#c6dac9"/><rect x="1" y="14" width="2" height="2" fill="#c6dac9"/><rect x="4" y="14" width="2" height="2" fill="#c6dac9"/><rect x="7" y="14" width="2" height="2" fill="#c6dac9"/><rect x="10" y="14" width="2" height="2" fill="#c6dac9"/><rect x="13" y="14" width="2" height="2" fill="#c6dac9"/><rect x="16" y="14" width="2" height="2" fill="#c6dac9"/><rect x="19" y="14" width="2" height="2" fill="#c6dac9"/><rect x="1" y="17" width="2" height="2" fill="#c6dac9"/><rect x="4" y="17" width="2" height="2" fill="#c6dac9"/><rect x="7" y="17" width="2" height="2" fill="#c6dac9"/><rect x="10" y="17" width="2" height="2" fill="#c6dac9"/><rect x="13" y="17" width="2" height="2" fill="#c6dac9"/><rect x="16" y="17" width="2" height="2" fill="#c6dac9"/><rect x="19" y="17" width="2" height="2" fill="#c6dac9"/><path d="M13 17.500c4 0 7-2 7-6h1.500l-3-4-3 4h2c0 3-2 4-4.500 4z" fill="#9ab79f" stroke="#8aa88f" stroke-width=".6"/></svg>
</div>
<div class="tb" style="left:560px;width:288px"><div class="grip"></div>
<svg class="a" style="left:11px;top:5px" width="24" height="22" viewBox="0 0 24 22"><circle cx="17" cy="8" r="4" fill="#8a5a14"/><path d="M13 6c0-4 8-4 8 0z" fill="#151515"/><path d="M11 18c0-5 3-7 6-7s6 2 6 7z" fill="#3fc34f" stroke="#1a8a2a" stroke-width=".5"/><circle cx="7" cy="8" r="5" fill="#fac88c"/><path d="M2 9c-1-8 11-8 10 0-1-3-3-4-5-4s-4 1-5 4z" fill="#c88a1e"/><path d="M0 20c0-6 3-8 7-8s7 2 7 8z" fill="#2a6ac8" stroke="#134a9a" stroke-width=".5"/><path d="M5 12l2 3 2-3z" fill="#dfe8f5"/></svg>
<svg class="a" style="left:41px;top:4px" width="24" height="25" viewBox="0 0 24 25"><path d="M.5.5h9l4 4v13H.5z" fill="#e6effc" stroke="#7b7bbf"/><path d="M9.500.5v4h4z" fill="#8ab4ea"/><path d="M3 7h8M3 9h8M3 11h8M3 13h8" stroke="#a9c9f3"/><path d="M8.500 7.500h9l4 4v13h-13z" fill="#e6effc" stroke="#7b7bbf"/><path d="M17.500 7.500v4h4z" fill="#8ab4ea"/><path d="M11 14h8M11 16h8M11 18h8M11 20h8" stroke="#a9c9f3"/></svg>
<svg class="a" style="left:0;top:0" width="0" height="0"><defs><linearGradient id="gb" x1="0" y1="0" x2="0" y2="1"><stop offset="0" stop-color="#f2bea4"/><stop offset=".5" stop-color="#d08460"/><stop offset="1" stop-color="#a04a28"/></linearGradient><linearGradient id="gw" x1="0" y1="0" x2="1" y2="0"><stop offset="0" stop-color="#fff"/><stop offset=".55" stop-color="#fff"/><stop offset=".8" stop-color="#b8b8b8"/><stop offset="1" stop-color="#f0f0f0"/></linearGradient><linearGradient id="gg" x1="0" y1="0" x2="1" y2="0"><stop offset="0" stop-color="#a8c830"/><stop offset=".5" stop-color="#7cb02c"/><stop offset="1" stop-color="#2f8a34"/></linearGradient></defs></svg>
<svg class="a" style="left:73px;top:5px" width="24" height="23" viewBox="0 0 24 23"><polygon points="18,15 23.500,.8 23.500,6 21.500,9 22,11 20,14 20.500,16 18.500,19 18,21.800" fill="#2a1a12"/><polygon points="9,.5 23.500,.5 18,15.200 .5,13.500" fill="url(#gw)" stroke="#333" stroke-width=".5"/><path d="M.5 13.500L18 15.200 23.500.8" stroke="#111" stroke-width="1" fill="none"/><polygon points=".5,14 18,15.700 18,21.800 6,20.300 5,19.300 .5,19" fill="url(#gb)" stroke="#5a2810" stroke-width=".5"/></svg>
<svg class="a" style="left:104px;top:5px" width="24" height="23" viewBox="0 0 24 23"><polygon points="18,15 23.500,.8 23.500,6 21.500,9 22,11 20,14 20.500,16 18.500,19 18,21.800" fill="#2a1a12"/><polygon points="9,.5 23.500,.5 18,15.200 .5,13.500" fill="url(#gg)" stroke="#333" stroke-width=".5"/><path d="M5 8.500l8.500.8M16 1.500l-7 12.500M13.500 6.500l6 .3" stroke="#f4f41a" stroke-width="1.200" fill="none"/><path d="M.5 13.500L18 15.200 23.500.8" stroke="#111" stroke-width="1" fill="none"/><polygon points=".5,14 18,15.700 18,21.800 6,20.300 5,19.300 .5,19" fill="url(#gb)" stroke="#5a2810" stroke-width=".5"/></svg>
<svg class="a" style="left:134px;top:5px" width="24" height="23" viewBox="0 0 24 23"><path d="M2 12l2 6 5 4 1-4z" fill="#1f78e0"/><path d="M2 8l2 6 6 4 1-5z" fill="#2ca02c"/><path d="M2 3l10-2 8 5-10 4z" fill="#f0b818"/><path d="M2 3l8 7 0 3-7-6z" fill="#c88a10"/><path d="M10 10l10-4v3l-10 4z" fill="#f5f0e0"/><rect x="11.500" y="12.500" width="9" height="9" fill="#fff" stroke="#888"/><path d="M10 11l4 7 8-11" stroke="#1a50c8" stroke-width="2" fill="none"/></svg>
<svg class="a" style="left:166px;top:5px" width="24" height="23" viewBox="0 0 24 23"><polygon points="18,15 23.500,.8 23.500,6 21.500,9 22,11 20,14 20.500,16 18.500,19 18,21.800" fill="#2a1a12"/><polygon points="9,.5 23.500,.5 18,15.200 .5,13.500" fill="url(#gg)" stroke="#333" stroke-width=".5"/><path d="M4 13l5-6.500 3-.5 2-2.500 6 .5 1.500 2-3.500 9z" fill="#2a58c0" stroke="#e03020" stroke-width="1"/><path d="M.5 13.500L18 15.200 23.500.8" stroke="#111" stroke-width="1" fill="none"/><polygon points=".5,14 18,15.700 18,21.800 6,20.300 5,19.300 .5,19" fill="url(#gb)" stroke="#5a2810" stroke-width=".5"/></svg>
<svg class="a" style="left:196px;top:4px" width="24" height="24" viewBox="0 0 24 24"><circle cx="12" cy="13" r="10.500" fill="#1e78d8"/><path d="M3 9c3-4 6-5 8-4l-2 5-4 3z M14 6l5 1 2 6-3 5-3-4z M6 17l4 1 2 4-4-1z" fill="#38b838"/><path d="M4 20L11 1l4 19M7 14h7" stroke="#f4f41a" stroke-width="1.600" fill="none"/></svg>
<svg class="a" style="left:226px;top:4px" width="25" height="25" viewBox="0 0 25 25"><rect x="5.500" y=".5" width="18" height="16" fill="#e9f0fb" stroke="#2a6ad8"/><rect x="6" y="1" width="17" height="2" fill="#2a6ad8"/><rect x="7" y="4" width="7" height="11" fill="#c9d6ef"/><path d="M15 6h6M15 9h6M15 12h6" stroke="#6aa0e8"/><rect x="1" y="7" width="9" height="2" fill="#2a6ad8"/><rect x="1" y="21" width="9" height="2" fill="#2a6ad8"/><rect x="2" y="9" width="7" height="12" fill="#dfe8f8"/><text x="2" y="23" font-family="Liberation Sans,sans-serif" font-weight="bold" font-size="12" textLength="22" lengthAdjust="spacingAndGlyphs" fill="#e01020" stroke="#a00010" stroke-width=".4">SQL</text></svg>
<svg class="a" style="left:260px;top:5px" width="20" height="24" viewBox="0 0 20 24"><path d="M.5 2.500L6 .5h11.500v17l-5 5.500L.5 20z" fill="#0a62d8"/><path d="M6 .5h11.500v17l-5 5.500H6z" fill="#2a8af0"/><path d="M7 2.500l10-.5v7l-10 1z" fill="#d4dcf2" stroke="#5a7ac8" stroke-width=".5"/><path d="M6 9.500l4-1.500 3 1.500-4 1.500z" fill="#fff"/><path d="M8 11.500l10.500-1.500v9.500L8 21.500z" fill="#d8e0f6" stroke="#4a6ac0" stroke-width=".5"/><path d="M10 5.500l4-.5v1.300l-4 .5zM11 16l4-.7v1.300l-4 .7z" fill="#d8902a"/></svg>
</div>
<div class="tree">
<div class="vd" style="left:13px;top:1px;height:638px"></div>
<div class="vd" style="left:70px;top:1px;height:638px"></div>
<div class="vd" style="left:127px;top:1px;height:638px"></div>
<div class="hd" style="left:133px;top:11px;width:3px"></div>
<div class="pm" style="left:123px;top:7px"><i></i><b></b></div>
<div class="node" style="left:139px;top:1px;color:#000">03:24:031001:38</div>
<div class="hd" style="left:133px;top:31px;width:3px"></div>
<div class="pm" style="left:123px;top:27px"><i></i><b></b></div>
<div class="node" style="left:139px;top:21px;color:#000">03:24:031001:39</div>
<div class="hd" style="left:133px;top:51px;width:3px"></div>
<div class="pm" style="left:123px;top:47px"><i></i><b></b></div>
<div class="node" style="left:139px;top:41px;color:#000">03:24:031001:40</div>
<div class="hd" style="left:133px;top:71px;width:3px"></div>
<div class="pm" style="left:123px;top:67px"><i></i><b></b></div>
<div class="node" style="left:139px;top:61px;color:#000">03:24:031001:41</div>
<div class="hd" style="left:133px;top:91px;width:3px"></div>
<div class="pm" style="left:123px;top:87px"><i></i><b></b></div>
<div class="node" style="left:139px;top:81px;color:#000">03:24:031001:42</div>
<div class="hd" style="left:133px;top:111px;width:3px"></div>
<div class="pm" style="left:123px;top:107px"><i></i><b></b></div>
<div class="node" style="left:139px;top:101px;color:#f0f">03:24:031001:43</div>
<div class="hd" style="left:133px;top:131px;width:3px"></div>
<div class="pm" style="left:123px;top:127px"><i></i><b></b></div>
<div class="node" style="left:139px;top:121px;color:#f0f">03:24:031001:44</div>
<div class="hd" style="left:133px;top:151px;width:3px"></div>
<div class="pm" style="left:123px;top:147px"><i></i><b></b></div>
<div class="node" style="left:139px;top:141px;color:#f0f">03:24:031001:45</div>
<div class="hd" style="left:133px;top:171px;width:3px"></div>
<div class="pm" style="left:123px;top:167px"><i></i><b></b></div>
<div class="node" style="left:139px;top:161px;color:#f0f">03:24:031001:46</div>
<div class="hd" style="left:133px;top:191px;width:3px"></div>
<div class="pm" style="left:123px;top:187px"><i></i><b></b></div>
<div class="node" style="left:139px;top:181px;color:#000080">03:24:031001:47</div>
<div class="hd" style="left:133px;top:211px;width:3px"></div>
<div class="pm" style="left:123px;top:207px"><i></i><b></b></div>
<div class="node" style="left:139px;top:201px;color:#000">03:24:031001:48</div>
<div class="hd" style="left:133px;top:231px;width:3px"></div>
<div class="pm" style="left:123px;top:227px"><i></i><b></b></div>
<div class="node" style="left:139px;top:221px;color:#000">03:24:031001:49</div>
<div class="hd" style="left:133px;top:251px;width:3px"></div>
<div class="pm" style="left:123px;top:247px"><i></i><b></b></div>
<div class="node" style="left:139px;top:241px;color:#f0f">03:24:031001:50</div>
<div class="hd" style="left:133px;top:271px;width:3px"></div>
<div class="pm" style="left:123px;top:267px"><i></i><b></b></div>
<div class="node" style="left:139px;top:261px;color:#000">03:24:031001:51</div>
<div class="hd" style="left:133px;top:291px;width:3px"></div>
<div class="pm" style="left:123px;top:287px"><i></i><b></b></div>
<div class="node" style="left:139px;top:281px;color:#f0f">03:24:031001:52</div>
<div class="hd" style="left:133px;top:311px;width:3px"></div>
<div class="pm" style="left:123px;top:307px"><i></i></div>
<div class="a" style="left:137px;top:301px;width:115px;height:20px;background:#599764;box-shadow:inset 0 0 0 1px #c78ac4;outline:1px dotted #000;outline-offset:-1px"></div>
<div class="node" style="left:139px;top:301px;color:#fff">03:24:031001:53</div>
<div class="vd" style="left:146px;top:321px;height:292px"></div>
<div class="hd" style="left:152px;top:331px;width:3px"></div>
<div class="pm" style="left:142px;top:327px"><i></i><b></b></div>
<div class="node c" style="left:158px;top:321px;letter-spacing:-0.3px">Права</div>
<div class="hd" style="left:152px;top:351px;width:3px"></div>
<div class="pm" style="left:142px;top:347px"><i></i><b></b></div>
<div class="node c" style="left:158px;top:341px">Обременения</div>
<div class="hd" style="left:152px;top:371px;width:3px"></div>
<div class="pm" style="left:142px;top:367px"><i></i><b></b></div>
<div class="node c" style="left:158px;top:361px">Категории земель</div>
<div class="hd" style="left:152px;top:391px;width:3px"></div>
<div class="pm" style="left:142px;top:387px"><i></i><b></b></div>
<div class="node c" style="left:158px;top:381px">Экономические характеристики</div>
<div class="hd" style="left:152px;top:411px;width:3px"></div>
<div class="pm" style="left:142px;top:407px"><i></i><b></b></div>
<div class="node c" style="left:158px;top:401px">Специальные сведения</div>
<div class="hd" style="left:152px;top:431px;width:3px"></div>
<div class="pm" style="left:142px;top:427px"><i></i><b></b></div>
<div class="node c" style="left:158px;top:421px;letter-spacing:0.3px">Угодья</div>
<div class="hd" style="left:152px;top:451px;width:3px"></div>
<div class="pm" style="left:142px;top:447px"><i></i><b></b></div>
<div class="node c" style="left:158px;top:441px">ЧЗУ</div>
<div class="hd" style="left:152px;top:471px;width:3px"></div>
<div class="pm" style="left:142px;top:467px"><i></i><b></b></div>
<div class="node c" style="left:158px;top:461px">Объект недвижимости</div>
<div class="hd" style="left:152px;top:491px;width:3px"></div>
<div class="pm" style="left:142px;top:487px"><i></i><b></b></div>
<div class="node c" style="left:158px;top:481px;letter-spacing:-0.17px">Дополнительный адрес</div>
<div class="hd" style="left:152px;top:511px;width:3px"></div>
<div class="pm" style="left:142px;top:507px"><i></i><b></b></div>
<div class="node c" style="left:158px;top:501px">Участки границ</div>
<div class="hd" style="left:152px;top:531px;width:3px"></div>
<div class="pm" style="left:142px;top:527px"><i></i><b></b></div>
<div class="node c" style="left:158px;top:521px;letter-spacing:-0.18px">Межевые точки</div>
<div class="hd" style="left:152px;top:551px;width:3px"></div>
<div class="pm" style="left:142px;top:547px"><i></i><b></b></div>
<div class="node c" style="left:158px;top:541px;letter-spacing:-0.16px">История (предыдущие номера)</div>
<div class="hd" style="left:152px;top:571px;width:3px"></div>
<div class="pm" style="left:142px;top:567px"><i></i><b></b></div>
<div class="node c" style="left:158px;top:561px;letter-spacing:-0.2px">История (последующие номера)</div>
<div class="hd" style="left:152px;top:591px;width:3px"></div>
<div class="pm" style="left:142px;top:587px"><i></i><b></b></div>
<div class="node c" style="left:158px;top:581px">История</div>
<div class="hd" style="left:152px;top:611px;width:3px"></div>
<div class="pm" style="left:142px;top:607px"><i></i><b></b></div>
<div class="node c" style="left:158px;top:601px;letter-spacing:-0.2px">Документы дела</div>
<div class="hd" style="left:133px;top:631px;width:3px"></div>
<div class="pm" style="left:123px;top:627px"><i></i><b></b></div>
<div class="node" style="left:139px;top:621px">03:24:031001:54</div>
<div class="a" style="left:1px;top:639px;width:415px;height:1px;background:#b2d1b7"></div>
<div class="a" style="left:400px;top:1px;width:16px;height:638px;background:#d0e3d3"></div>
<div class="sbtn" style="left:400px;top:1px;width:15px;height:15px"><svg class="a" style="left:4px;top:4px" width="5" height="3"><path d="M0 3h5L2.500 0z" fill="#000"/></svg></div>
<div class="sbtn" style="left:400px;top:624px;width:15px;height:15px"><svg class="a" style="left:4px;top:6px" width="5" height="3"><path d="M0 0h5L2.500 3z" fill="#000"/></svg></div>
<div class="sbtn" style="left:400px;top:155px;width:15px;height:80px"></div>
</div>
<div class="a" style="left:418px;top:76px;width:1px;height:642px;background:#599764"></div>
<div class="a" style="left:419px;top:76px;width:2px;height:642px;background:#d0e3d3"></div>
<div class="a" style="left:421px;top:76px;width:1px;height:642px;background:#599764"></div>
<div class="a" style="left:422px;top:76px;width:3px;height:642px;background:#d0e3d3"></div>
<div class="a" style="left:425px;top:100px;width:598px;height:1px;background:#d0e3d3"></div>
<div class="a" style="left:1023px;top:76px;width:1px;height:642px;background:#000"></div>
<div class="a" style="left:1022px;top:101px;width:1px;height:617px;background:#599764"></div>
<div class="tab" style="left:565px;width:126px"><span style="left:2.2999999999999545px;letter-spacing:-0.12px">Общие сведения</span></div>
<div class="tab" style="left:692px;width:117px"><span style="left:3px;letter-spacing:-0.05px">Использование</span></div>
<div class="tab" style="left:810px;width:126px"><span style="left:4px;letter-spacing:-0.4px">Местоположение</span></div>
<div class="tab" style="left:937px;width:60px"><span style="left:4px;letter-spacing:-0.45px">Площадь</span></div>
<div class="tab" style="left:424px;top:76px;width:140px;height:26px;background:#a2c8a9;border-bottom:none"><span style="left:6.500px;top:1px">Краткие сведения</span></div>
<div class="a" style="left:982px;top:76px;width:41px;height:24px;background:#a2c8a9"></div>
<div class="a" style="left:983px;top:78px;width:20px;height:20px;background:#a2c8a9;border:1px solid;border-color:#d0e3d3 #000 #000 #d0e3d3;box-shadow:inset -1px -1px 0 #599764"><svg class="a" style="left:4px;top:3px" width="5" height="9"><path d="M5 0v9L0 4.500z" fill="#000"/></svg></div>
<div class="a" style="left:1003px;top:78px;width:20px;height:20px;background:#a2c8a9;border:1px solid;border-color:#d0e3d3 #000 #000 #d0e3d3;box-shadow:inset -1px -1px 0 #599764"><svg class="a" style="left:8px;top:3px" width="5" height="9"><path d="M0 0v9L5 4.500z" fill="#000"/></svg></div>
<div class="a" style="left:1002px;top:77px;width:1px;height:1px;background:#000"></div>
<div class="bevel" style="left:430px;top:110px;width:582px;height:144px"></div>
<div class="inp" style="left:440px;top:116px;width:138px;height:25px"><span><span style="letter-spacing:-.3px;position:static">03:24:031001:53</span></span></div>
<div class="inp" style="left:582px;top:116px;width:138px;height:25px"><span><span style="position:static;letter-spacing:-.25px">Землепользование</span></span></div>
<div class="inp" style="left:724px;top:116px;width:138px;height:25px"><span>Учтенные</span></div>
<div class="lbl" style="left:866px;top:121px;width:144px;overflow:hidden;letter-spacing:-.16px">Внесено в ГКН: 06.0</div>
<div class="inp" style="left:440px;top:145px;width:281px;height:25px"><span>Выдел</span></div>
<div class="inp" style="left:725px;top:145px;width:240px;height:25px"><span><span style="position:static;letter-spacing:-.3px">592</span></span></div>
<div class="lbl" style="left:969px;top:150px;">кв.м.</div>
<div class="inp" style="left:440px;top:174px;width:565px;height:76px"><span><span style="position:static;margin-left:4px;letter-spacing:-.05px">Для ведения садоводства</span></span></div>
<div class="a" style="left:988px;top:176px;width:15px;height:72px;background:#d0e3d3"></div>
<div class="sbtn" style="left:988px;top:176px;width:15px;height:15px"><svg class="a" style="left:3px;top:4px" width="7" height="5"><path d="M1 4h5v-1" stroke="#fff" fill="none"/><path d="M0 3h5L2.500 0z" fill="#599764"/></svg></div>
<div class="sbtn" style="left:988px;top:233px;width:15px;height:15px"><svg class="a" style="left:3px;top:4px" width="7" height="5"><path d="M3.500 4l2.500-2.500" stroke="#fff" fill="none"/><path d="M0 0h5L2.500 3z" fill="#599764"/></svg></div>
<div class="bevel" style="left:430px;top:254px;width:582px;height:127px"></div>
<div class="inp" style="left:440px;top:259px;width:185px;height:25px"><span></span></div>
<div class="lbl" style="left:646px;top:263px;letter-spacing:-.2px">За пределами участка</div>
<div class="lbl" style="left:851px;top:263px;">Объект привязан</div>
<div class="inp" style="left:440px;top:286px;width:565px;height:25px"><span><span style="position:static;letter-spacing:-.06px">Респ. Бурятия, г. Улан-Удэ, ул. Тологойская, дом 21</span></span></div>
<div class="inp" style="left:440px;top:316px;width:565px;height:25px"><span></span></div>
<div class="inp" style="left:440px;top:346px;width:139px;height:25px"><span>Дом</span></div>
<div class="inp" style="left:582px;top:346px;width:139px;height:25px"><span><span style="position:static;letter-spacing:-.3px">21</span></span></div>
<div class="inp" style="left:724px;top:346px;width:139px;height:25px"><span>Корпус</span></div>
<div class="inp" style="left:866px;top:346px;width:140px;height:25px"><span></span></div>
<div class="bevel" style="left:430px;top:395px;width:582px;height:93px"></div>
<div class="lbl" style="left:442px;top:387px;padding:0 3px;letter-spacing:-.2px">Категории земель</div>
<div class="inp" style="left:440px;top:405px;width:564px;height:79px;overflow:hidden">
<div class="a" style="left:1px;top:22px;width:12px;height:1px;background:#000"></div>
<div class="a" style="left:1px;top:1px;width:12px;height:21px;background:#a2c8a9;border:1px solid;border-color:#d0e3d3 #599764 #599764 #d0e3d3"><svg class="a" style="left:2px;top:4px" width="6" height="11"><path d="M0 0v11L6 5.500z" fill="#000"/></svg></div>
<div class="a" style="left:13px;top:22px;width:564px;height:1px;background:#c0c0c0"></div>
<span style="left:15.500px;top:2px;line-height:20px"><span style="position:static;letter-spacing:-.22px">Земли населенных пунктов</span></span>
</div>
<div class="bevel" style="left:432px;top:498px;width:580px;height:213px"></div>
<div class="lbl" style="left:438px;top:490px;padding:0 5px;letter-spacing:-.3px">Права</div>
<div class="inp" style="left:440px;top:508px;width:564px;height:199px;overflow:hidden">
<div class="a" style="left:1px;top:22px;width:12px;height:1px;background:#000"></div>
<div class="a" style="left:1px;top:1px;width:12px;height:21px;background:#a2c8a9;border:1px solid;border-color:#d0e3d3 #599764 #599764 #d0e3d3"><svg class="a" style="left:2px;top:4px" width="6" height="11"><path d="M0 0v11L6 5.500z" fill="#000"/></svg></div>
<div class="a" style="left:13px;top:22px;width:564px;height:1px;background:#c0c0c0"></div>
<span style="left:15.500px;top:2px;line-height:20px">собственность</span>
<div class="a" style="left:377px;top:1px;width:1px;height:21px;background:#c0c0c0"></div>
<span style="left:380px;top:2px;line-height:20px"><i style="font-style:normal;letter-spacing:-.15px">Сергеева Валентина Степановна</i></span>
<div class="a" style="left:1px;top:181px;width:560px;height:15px;background:#d0e3d3"></div>
<div class="sbtn" style="left:1px;top:181px;width:15px;height:15px"><svg class="a" style="left:4px;top:3px" width="4" height="7"><path d="M4 0v7L0 3.500z" fill="#000"/></svg></div>
<div class="sbtn" style="left:546px;top:181px;width:15px;height:15px"><svg class="a" style="left:4px;top:3px" width="4" height="7"><path d="M0 0v7L4 3.500z" fill="#000"/></svg></div>
<div class="sbtn" style="left:16px;top:181px;width:15px;height:15px"></div>
</div>
<div class="a" style="left:425px;top:716px;width:598px;height:1px;background:#599764"></div>
<div class="a" style="left:424px;top:717px;width:600px;height:1px;background:#000"></div>
<div class="a" style="left:0;top:718px;width:1024px;height:21px;background:linear-gradient(180deg,#edf5ed 0%,#dcebde 30%,#c3dac6 65%,#a7c9ac 100%)"></div>
<div class="a" style="left:0;top:720px;width:98px;height:18px;border:1px solid #a3c4a8"></div>
<div class="a" style="left:100px;top:720px;width:248px;height:18px;border:1px solid #a3c4a8"></div>
<div class="t" style="left:3px;top:720px;line-height:19px;letter-spacing:-.3px">160</div>
<div class="t" style="left:102px;top:720px;line-height:19px">Учтенные</div>
<div class="a" style="left:0;top:739px;width:1024px;height:1px;background:#d0e3d3"></div>
<div class="task" style="left:2px;width:53px;font-family:'DejaVu Sans Condensed','Liberation Sans',sans-serif;font-weight:bold"><svg class="a" style="left:3px;top:2px" width="16" height="16" viewBox="0 0 16 16"><path d="M2 2c2-1 3-1 5 0l-1 5c-2-1-3-1-5 0z" fill="#f26a22"/><path d="M8 2.500c2 1 3 1 5 0l-1 5c-2 1-3 1-5 0z" fill="#7ec03a"/><path d="M1 8c2-1 3-1 5 0l-1 5c-2-1-3-1-5 0z" fill="#3a7ae0"/><path d="M7 8.500c2 1 3 1 5 0l-1 5c-2 1-3 1-5 0z" fill="#f5c61e"/></svg><span style="left:19px;top:1px;letter-spacing:0">Пуск</span></div>
<svg class="a" style="left:63px;top:746px" width="16" height="16" viewBox="0 0 16 16"><path d="M1.300 14c-2-3 3-10 9-12.500 3-1 5 0 4.200 2.500" stroke="#6ab8f6" stroke-width="1.200" fill="none"/><circle cx="8" cy="8.800" r="4.400" stroke="#1b7fe0" stroke-width="2.900" fill="none"/><rect x="9" y="9.800" width="6" height="2.300" fill="#a2c8a9"/><rect x="4" y="7.700" width="9.800" height="2.200" fill="#1b7fe0"/><path d="M5 6.500a3.500 3.500 0 0 1 6 0" stroke="#5aaef4" stroke-width="1" fill="none"/><path d="M1.300 14c.8 1.500 3 1 5-.2" stroke="#6ab8f6" stroke-width="1.200" fill="none"/></svg>
<svg class="a" style="left:86px;top:746px" width="16" height="16" viewBox="0 0 16 16"><path d="M1 3l9-2.500 3 1v10l-3 3-9-1z" fill="#1a6edc" stroke="#0c4aa8" stroke-width=".5"/><rect x="2.500" y="4" width="8.500" height="9" rx="2.500" fill="#f2ecd2"/><path d="M8.500 6.500a2.800 2.800 0 1 0 1 4" stroke="#2a66cc" stroke-width="1.500" fill="none"/><path d="M6 10l5.500-5" stroke="#1a1a1a" stroke-width="1.300"/><path d="M10.500 5.500l2-2" stroke="#fff" stroke-width="1.200"/><circle cx="13.800" cy="4.500" r="1.200" fill="#e8481c"/></svg>
<svg class="a" style="left:109px;top:746px" width="16" height="16" viewBox="0 0 16 16"><circle cx="8" cy="8" r="7.300" fill="#c8d4ec" stroke="#5a6a88" stroke-width=".8"/><path d="M8 1.200a6.800 6.800 0 0 1 6.800 6.800" stroke="#58a868" stroke-width="1.400" fill="none"/><path d="M1.200 8a6.800 6.800 0 0 1 6.800-6.800" stroke="#d06a58" stroke-width="1.400" fill="none"/><path d="M14.800 8a6.800 6.800 0 0 1-6.800 6.800" stroke="#d8b858" stroke-width="1.400" fill="none"/><path d="M8 14.800a6.800 6.800 0 0 1-6.800-6.800" stroke="#5a7ad0" stroke-width="1.400" fill="none"/><circle cx="8" cy="8" r="5" fill="#e4ecfa"/><circle cx="8" cy="8" r="4" fill="#3a5cc8"/><path d="M6.500 5.500v5l4.500-2.500z" fill="#0a1a88"/></svg>
<svg class="a" style="left:132px;top:746px" width="17" height="16" viewBox="0 0 17 16"><rect x="1.500" y=".5" width="12" height="9" fill="#a8a8a8" stroke="#444"/><rect x="3" y="2" width="9" height="6" fill="#0808e8"/><rect x="6" y="4" width="1" height="1" fill="#40e8f0"/><rect x="5" y="10" width="5" height="1.500" fill="#222"/><rect x=".5" y="11.500" width="15" height="4" fill="#d0d0d0" stroke="#222"/><rect x="2" y="13" width="3" height="1" fill="#20e0e8"/><rect x="9" y="13" width="5" height="1" fill="#111"/></svg>
<div class="task" style="left:213px;width:160px;"><svg class="a" style="left:3px;top:2px" width="17" height="17" viewBox="0 0 17 17"><path d="M5.500 2.500h8l3 3v11h-11z" fill="#e8f0fc" stroke="#7a8ac0"/><path d="M8 10h7M8 12h7M8 14h7" stroke="#a8c4ee"/><rect x=".5" y="1.500" width="10" height="9" fill="#2a50b8" stroke="#16307a"/><path d="M2 3.500l1.500 5 1.700-4 1.700 4 1.600-5" stroke="#fff" stroke-width="1.300" fill="none"/></svg><span><i style="font-style:normal;letter-spacing:-1.300px">!!!!!!!</i>_отчет по практи...</span></div>
<div class="task" style="left:376px;width:160px;border-color:#000 #d0e3d3 #d0e3d3 #000;box-shadow:inset 1px 1px 0 #599764;background:repeating-conic-gradient(#d0e3d3 0 25%,#a2c8a9 0 50%) 0 0/2px 2px;font-weight:bold;"><svg class="a" style="left:4px;top:2px" width="17" height="17" viewBox="0 0 17 17"><polygon points="16.500,1 16.500,8 13,16 13,11.500" fill="#1a120c"/><polygon points="6,1 16.500,1 13,11.500 1,9.500" fill="url(#gg)"/><path d="M3.500 6l6.500 1M11 1.500l-4.500 9M9.500 4l5 .3" stroke="#f0f01a" stroke-width=".9" fill="none"/><path d="M1 9.700l12 1.900 3.500-10.500" stroke="#0a0a0a" stroke-width=".8" fill="none"/><polygon points="1,10.200 13,12 13,16 7,15.200 6,14.500 1,13.800" fill="url(#gb)"/></svg><span><i style="font-style:normal;letter-spacing:.45px">Земельные участ...</i></span></div>
<div class="task" style="left:539px;width:160px;"><svg class="a" style="left:4px;top:3px" width="17" height="15" viewBox="0 0 17 15"><path d="M1 3c0-1 1-2 2-2h4l2 2h6c1 0 1 1 1 2v7c0 1-1 2-2 2H3c-1 0-2-1-2-2z" fill="#e8b838" stroke="#9a7414"/><path d="M2 6h13v6c0 1-1 1-1 1H3s-1 0-1-1z" fill="#fbe89a"/></svg><span>летняя практика_20...</span></div>
<div class="task" style="left:702px;width:160px;"><svg class="a" style="left:3px;top:2px" width="17" height="17" viewBox="0 0 17 17"><rect x="0" y="0" width="17" height="17" fill="#e8eee8"/><circle cx="8.500" cy="8.500" r="7.500" fill="#2a7ae0"/><path d="M3 5c2-2 5-3 6-1l-1 3-3 2zM10 8l4 0 1 3-3 3-2-3z" fill="#3ab83a"/></svg><span>Выполнение запроса</span></div>
<div class="a" style="left:895px;top:746px;width:16px;height:16px;background:#599764;color:#fff;font-family:'DejaVu Sans Condensed',sans-serif;font-size:12px;line-height:16px;text-align:center;letter-spacing:-.2px">RU</div>
<div class="a" style="left:915px;top:742px;width:1px;height:23px;background:#599764;opacity:.5"></div><div class="a" style="left:916px;top:742px;width:1px;height:23px;background:#d0e3d3"></div>
<div class="a" style="left:922px;top:742px;width:100px;height:23px;border:1px solid;border-color:#599764 #d0e3d3 #d0e3d3 #599764"></div>
<div class="t" style="left:926.500px;top:742px;font-size:14px;font-weight:bold;font-family:'DejaVu Sans Condensed',sans-serif;letter-spacing:-1px">«</div>
<svg class="a" style="left:940px;top:747px" width="16" height="15" viewBox="0 0 16 15"><rect x=".5" y="1.500" width="14" height="9" fill="#2a8a3a" stroke="#0a2a10"/><path d="M3 3v6M6 3v3M9 3v3M12 3v6" stroke="#0a3a12"/><rect x="2" y="3" width="11" height="2" fill="#48b058" opacity=".7"/><rect x="8" y="9" width="5" height="3" fill="#f0e020"/><path d="M7 5h-3v3h3c1 3-2 5-5 4" stroke="#e81818" stroke-width="1.400" fill="none"/></svg>
<svg class="a" style="left:958px;top:745px" width="18" height="18" viewBox="0 0 18 18"><rect x="1.500" y="1.500" width="8" height="13" fill="#dcdcdc" stroke="#777"/><path d="M2 4.500h7M2 7.500h7M2 10.500h7" stroke="#999"/><circle cx="4" cy="13" r=".8" fill="#e02020"/><circle cx="11.500" cy="11.500" r="4.500" fill="#fff" stroke="#333"/><path d="M10 8.800v5.400l4.300-2.700z" fill="#18a018"/></svg>
<div class="t" style="left:982px;top:744px;font-size:12px;font-family:'DejaVu Sans Condensed',sans-serif;letter-spacing:-.3px">12:46</div>
</body></html>
